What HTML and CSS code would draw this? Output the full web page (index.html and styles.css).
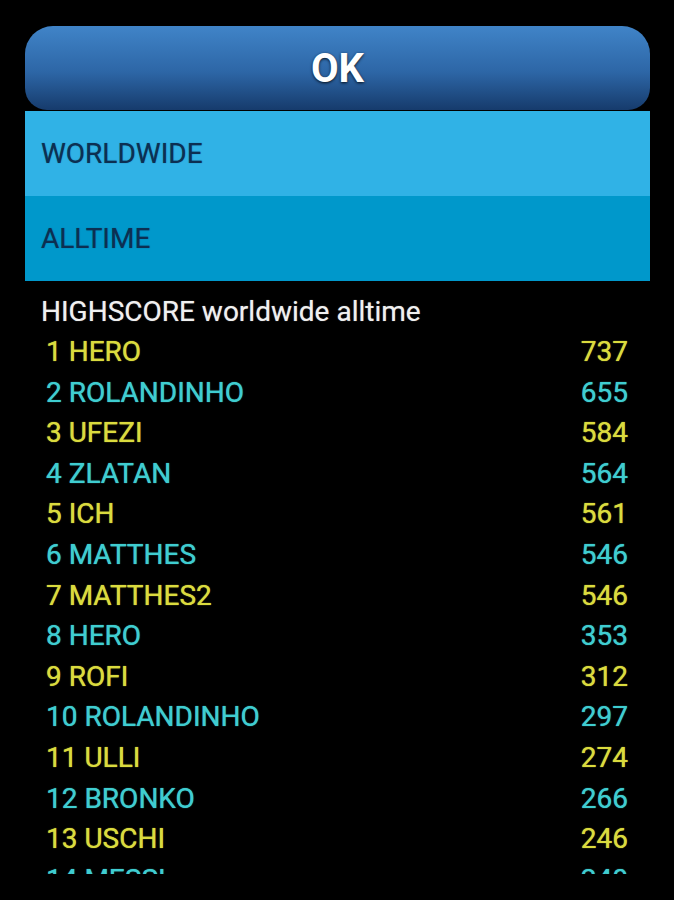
FILE: index.html
```html
<!DOCTYPE html>
<html lang="en">
<head>
  <meta charset="UTF-8" />
  <title>Highscore</title>
  <link rel="stylesheet" href="styles.css">
</head>
<body>
  <div class="screen">
    <button class="ok-btn">OK</button>

    <div class="filters">
      <div class="filter filter-region">WORLDWIDE</div>
      <div class="filter filter-time">ALLTIME</div>
    </div>

    <div class="scores">
      <div class="scores-title">HIGHSCORE worldwide alltime</div>
      <ul class="score-list">
        <li class="row odd"><span>1 HERO</span><span>737</span></li>
        <li class="row even"><span>2 ROLANDINHO</span><span>655</span></li>
        <li class="row odd"><span>3 UFEZI</span><span>584</span></li>
        <li class="row even"><span>4 ZLATAN</span><span>564</span></li>
        <li class="row odd"><span>5 ICH</span><span>561</span></li>
        <li class="row even"><span>6 MATTHES</span><span>546</span></li>
        <li class="row odd"><span>7 MATTHES2</span><span>546</span></li>
        <li class="row even"><span>8 HERO</span><span>353</span></li>
        <li class="row odd"><span>9 ROFI</span><span>312</span></li>
        <li class="row even"><span>10 ROLANDINHO</span><span>297</span></li>
        <li class="row odd"><span>11 ULLI</span><span>274</span></li>
        <li class="row even"><span>12 BRONKO</span><span>266</span></li>
        <li class="row odd"><span>13 USCHI</span><span>246</span></li>
        <li class="row even"><span>14 MESSI</span><span>240</span></li>
        <li class="row odd"><span>15 KLOPPO</span><span>231</span></li>
      </ul>
    </div>
  </div>
</body>
</html>
```

FILE: styles.css
```css
body {
  margin: 0;
  background: #000;
  font-family: Roboto, "Noto Sans", sans-serif;
}

.screen {
  width: 625px;
  padding: 26px 0 0 25px;
}

/* big OK button */
.ok-btn {
  display: block;
  width: 625px;
  height: 84px;
  margin-bottom: 1px;
  border: none;
  border-radius: 28px 28px 22px 22px;
  background: linear-gradient(#4084c8, #2d66a6 55%, #163b6c);
  color: #fff;
  font-family: Roboto, sans-serif;
  font-weight: bold;
  font-size: 40px;
  text-shadow: 0 1px 3px rgba(0,0,0,0.85);
  padding: 0;
}

.filter {
  height: 85px;
  line-height: 85px;
  padding-left: 16px;
  font-size: 28px;
  color: #0c2f52;
  text-shadow: 0 0 1px rgba(12,47,82,0.6);
}

.filter-region {
  background: #30b2e6;
}

.filter-time {
  background: #0098cb;
}

.scores {
  height: 582px;
  padding-top: 11px;
  overflow: hidden;
}

.scores-title {
  height: 40px;
  line-height: 40px;
  padding-left: 16px;
  font-size: 28px;
  color: #f0f0f0;
  text-shadow: 0 0 1px rgba(240,240,240,0.6);
}

.score-list {
  list-style: none;
  margin: 0;
  padding: 0 22px 0 21px;
}

.row {
  display: flex;
  justify-content: space-between;
  height: 40.6px;
  line-height: 40.6px;
  font-size: 28px;
  text-shadow: 0 0 1px currentColor;
}

.odd {
  color: #dadb3e;
}

.even {
  color: #3fcdd0;
}
```
